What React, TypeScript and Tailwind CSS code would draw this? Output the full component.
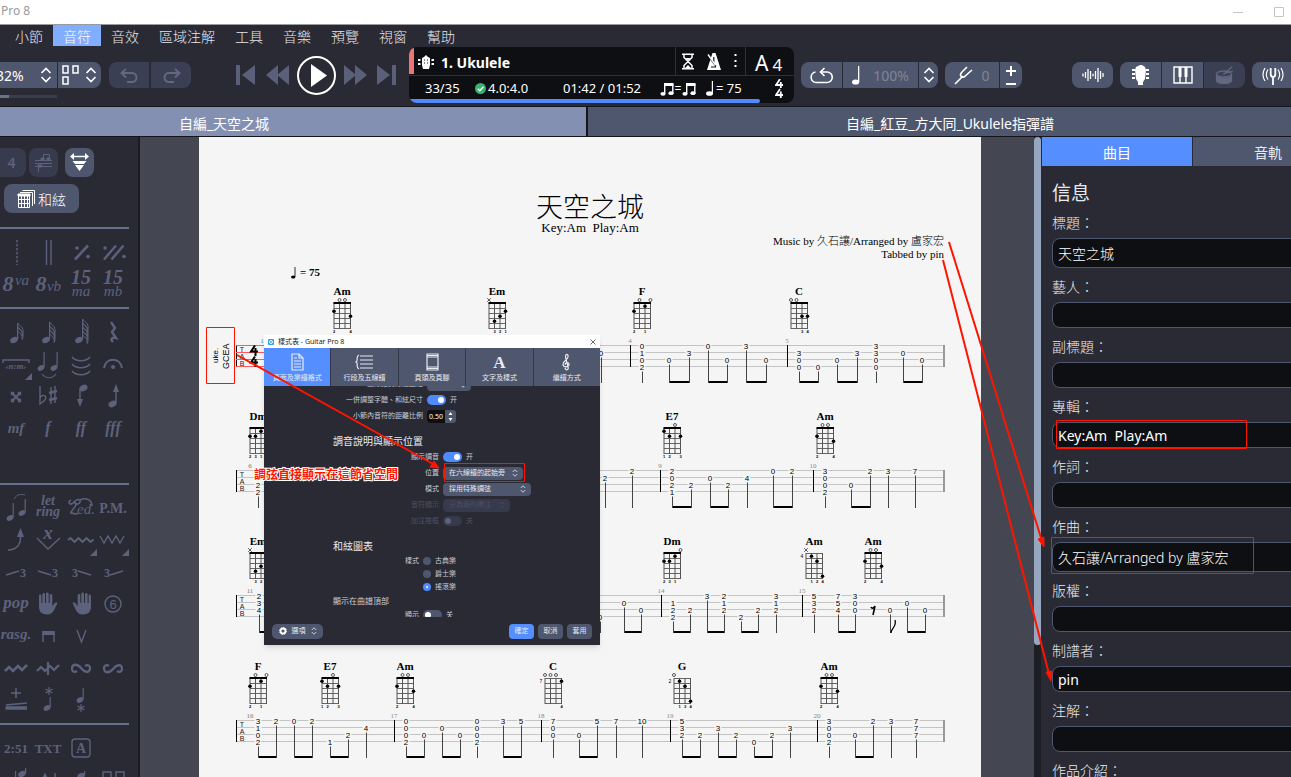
import type { ReactNode } from "react";

const UI = "font-['Noto_Sans','Noto_Sans_CJK_TC',sans-serif]";
const SERIF = "font-['Liberation_Serif','Noto_Sans_CJK_TC',serif]";

/* ---------- small shared drawings ---------- */

function UpDown({ className = "h-4 w-3" }: { className?: string }) {
  return (
    <svg viewBox="0 0 12 16" className={className} fill="none" stroke="currentColor" strokeWidth="1.6">
      <path d="M1.5 6 6 1.5 10.5 6M1.5 10 6 14.5 10.5 10" />
    </svg>
  );
}

type NoteProps = { x: number; y: number; len?: number; flags?: number; r?: number };

function Note({ x, y, len = 16, flags = 0, r = 4 }: NoteProps) {
  const sx = x + r - 0.4;
  return (
    <g stroke="none" fill="currentColor">
      <ellipse cx={x} cy={y} rx={r} ry={r * 0.72} transform={`rotate(-28 ${x} ${y})`} />
      <rect x={sx - 0.6} y={y - len} width="1.2" height={len - 1} />
      {Array.from({ length: flags }, (_, i) => (
        <path
          key={i}
          d={`M${sx} ${y - len + i * 4}c1 2.500 5.500 3.500 5.500 7.500 0 2-.2 3.500-.8 5 0-4.500-2.200-7-4.700-8z`}
          fill="none"
          stroke="currentColor"
          strokeWidth="1"
        />
      ))}
    </g>
  );
}

/* ---------- menu and toolbar ---------- */

const MENUS = ["小節", "音符", "音效", "區域注解", "工具", "音樂", "預覽", "視窗", "幫助"];

function MenuBar() {
  return (
    <nav className="flex h-[21px] pl-[5px] text-[14px] font-light leading-[24px] text-[#e4e6ee]">
      {MENUS.map((m) => (
        <button key={m} className={m === "音符" ? "bg-[#82aeff] px-[10px] text-white" : "px-[10px]"}>
          {m}
        </button>
      ))}
    </nav>
  );
}

function ToolButton({ label, dim, className = "", children }: { label: string; dim?: boolean; className?: string; children: ReactNode }) {
  return (
    <button
      aria-label={label}
      className={`flex h-[26px] items-center ${dim ? "bg-[#3b3f54] text-[#63677f]" : "bg-[#4f576f] text-white"} ${className}`}
    >
      {children}
    </button>
  );
}

function Transport() {
  return (
    <div className="ml-[45px] flex items-center text-[#5a5f7a]">
      <button aria-label="首" className="mr-[11px]">
        <svg width="19" height="20" fill="currentColor"><path d="M0 0h4v20H0zM19 0v20L6 10z" /></svg>
      </button>
      <button aria-label="退" className="mr-[8px]">
        <svg width="23" height="20" fill="currentColor"><path d="M12 0v20L0 10zM23 0v20L11 10z" /></svg>
      </button>
      <button aria-label="播放" className="mr-[8px] flex size-[39px] items-center justify-center rounded-full border-2 border-white text-white">
        <svg width="17" height="23" fill="currentColor" className="ml-[5px]"><path d="M0 0v23L16 11.500z" /></svg>
      </button>
      <button aria-label="進" className="mr-[10px]">
        <svg width="23" height="20" fill="currentColor"><path d="M0 0v20L12 10zM11 0v20L23 10z" /></svg>
      </button>
      <button aria-label="尾">
        <svg width="19" height="20" fill="currentColor"><path d="M15 0h4v20h-4zM0 0v20L13 10z" /></svg>
      </button>
    </div>
  );
}

function EighthPair() {
  return (
    <svg width="14" height="14" viewBox="0 0 14 14" fill="currentColor">
      <path d="M4 1h9.500v3H4z" />
      <path d="M4 2h1.400v9.500H4zM12.100 2h1.400v9h-1.400z" />
      <ellipse cx="3" cy="11.800" rx="2.600" ry="1.900" />
      <ellipse cx="11" cy="11.200" rx="2.600" ry="1.900" />
    </svg>
  );
}

function Display() {
  return (
    <section className="ml-[13px] w-[385px] shrink-0 overflow-hidden rounded-[8px] bg-[#0e0f13] text-white">
      <div className="flex h-[29px] items-center border-b border-[#2e303a]">
        <span className="h-[26px] w-[5px] rounded-tl-[6px] bg-[#ee7377]" />
        <svg width="16" height="16" viewBox="0 0 16 16" className="ml-[4px] mt-[2px]" fill="currentColor">
          <path d="M4 4l2-1 2-2 2 2 2 1v7l-1 4H5l-1-4z" />
          <path d="M0 5h2.500v2H0zM0 9h2.500v2H0zM13.500 5H16v2h-2.500zM13.500 9H16v2h-2.500z" />
          <path d="M6 5.500h1v1H6zM9 5.500h1v1H9zM6 8.500h1v1H6zM9 8.500h1v1H9z" fill="#0e0f13" />
        </svg>
        <strong className="ml-[7px] flex-1 pt-[3px] text-[14px] leading-[20px]">1. Ukulele</strong>
        <div className="flex h-full w-[70px] items-center justify-between border-l border-[#2e303a] pl-[6px] pr-[7px]">
          <svg width="12" height="17" viewBox="0 0 12 17" fill="none" stroke="currentColor" strokeWidth="1.500">
            <path d="M0 1.200h12M0 15.800h12M2 1v3.500l4 4 4-4V1M2 16v-3.500l4-4 4 4V16" />
            <path d="M3.500 5h5L6 7.500zM3 15l3-3 3 3z" fill="currentColor" stroke="none" />
          </svg>
          <svg width="15" height="17" viewBox="0 0 15 17" fill="currentColor">
            <path d="M5.500 0h3L14 17H0z" />
            <path d="M1.500 3.500 9 13.500M6.800 4v6M9 14H4" fill="none" stroke="#0e0f13" strokeWidth="1.200" />
            <path d="M1 1.500 8.500 12" fill="none" stroke="currentColor" strokeWidth="1.400" />
          </svg>
          <svg width="4" height="14" fill="currentColor"><path d="M.5 0h2v2h-2zM.5 6h2v2h-2zM.5 11h2v2h-2z" /></svg>
        </div>
        <div className="flex h-full w-[49px] items-baseline border-l border-[#2e303a] pl-[9px] text-[21px] leading-[33px]">
          A<span className="ml-[4px] text-[17px]">4</span>
        </div>
      </div>
      <div className="flex h-[23px] items-center pl-[16px] pt-[2px] text-[13px]">
        <span className="w-[50px]">33/35</span>
        <svg width="11" height="11" viewBox="0 0 11 11">
          <circle cx="5.500" cy="5.500" r="5.500" fill="#36b36c" />
          <path d="m2.800 5.800 2 2 3.600-4" fill="none" stroke="#fff" strokeWidth="1.400" />
        </svg>
        <span className="ml-[2px] w-[75px]">4.0:4.0</span>
        <span className="w-[97px]">01:42 / 01:52</span>
        <EighthPair />
        <span className="w-[8px] text-center text-[12px]">=</span>
        <EighthPair />
        <svg width="8" height="15" viewBox="0 0 8 15" className="ml-[10px]" fill="currentColor">
          <ellipse cx="3.500" cy="12.500" rx="3.500" ry="2.300" />
          <path d="M5.800 0H7v12.500H5.800z" />
        </svg>
        <span className="ml-[2px] flex-1 text-[13px]">= 75</span>
        <svg width="9" height="19" viewBox="0 0 9 19" className="mr-[10px]" fill="none" stroke="currentColor" strokeWidth="1.800">
          <path d="M5 0 1 6h7M5.800 3v6M5 10l-4 6h7M5.800 12.500V19" />
        </svg>
      </div>
      <div className="h-[4px] w-[351px] rounded-r-full bg-[#4f8bff]" />
    </section>
  );
}

function Toolbar() {
  return (
    <div className="flex h-[58px] items-center">
      <div className="relative flex gap-px">
        <ToolButton label="縮放" className="w-[57px] justify-between pr-[5px]">
          <span className="-ml-[4px] text-[14px]">32%</span>
          <UpDown />
        </ToolButton>
        <ToolButton label="版面" className="w-[43px] justify-center gap-[6px] rounded-r-[8px]">
          <svg width="17" height="20" fill="none" stroke="currentColor" strokeWidth="1.500">
            <path d="M1 1h5v7H1zM11 1h5v7h-5zM1 12h5v7H1z" />
          </svg>
          <UpDown className="h-4 w-3" />
        </ToolButton>
        <div className="absolute left-0 top-[33px] h-[3px] w-[57px] bg-[#3b3d4a]">
          <div className="h-full w-[9px] bg-[#6d7182]" />
        </div>
      </div>
      <div className="ml-[8px] flex gap-[2px]">
        <ToolButton label="復原" dim className="w-[40px] justify-center rounded-l-[8px]">
          <svg width="19" height="15" fill="none" stroke="currentColor" strokeWidth="2"><path d="M6 1 1.500 5 6 9.500M2 5h10a4.500 4.500 0 0 1 0 9H7" /></svg>
        </ToolButton>
        <ToolButton label="重做" dim className="w-[40px] justify-center rounded-r-[8px]">
          <svg width="19" height="15" fill="none" stroke="currentColor" strokeWidth="2"><path d="m13 1 4.500 4L13 9.500M17 5H7a4.500 4.500 0 0 0 0 9h5" /></svg>
        </ToolButton>
      </div>
      <Transport />
      <Display />
      <div className="ml-[7px] flex gap-px">
        <ToolButton label="循環" className="w-[41px] justify-center rounded-l-[8px]">
          <svg width="23" height="17" fill="none" stroke="currentColor" strokeWidth="1.600"><path d="M5.500 5A5.300 5.300 0 0 0 6 15.500h11A5.200 5.200 0 0 0 17 5h-6M14.500 1 10.500 5l4 4" /></svg>
        </ToolButton>
        <ToolButton label="速度" className="w-[75px] justify-center gap-[13px]">
          <svg width="8" height="19" viewBox="0 0 8 19" fill="currentColor"><ellipse cx="3.600" cy="16" rx="3.600" ry="2.600" /><path d="M6 0h1.300v16H6z" /></svg>
          <span className="text-[14px] text-[#808493]">100%</span>
        </ToolButton>
        <ToolButton label="速度調整" className="w-[19px] justify-center rounded-r-[8px]"><UpDown className="h-4 w-3" /></ToolButton>
      </div>
      <div className="ml-[7px] flex gap-px">
        <ToolButton label="移調" className="w-[54px] justify-center gap-[8px] rounded-l-[8px]">
          <svg width="19" height="19" fill="none" stroke="currentColor" strokeWidth="1.600"><path d="m1 18 7-7M13 1 8 6c-3 3-1 6 2 5l8-7M8 11l1-1" /></svg>
          <span className="text-[14px] text-[#808493]">0</span>
        </ToolButton>
        <ToolButton label="加減" className="w-[22px] justify-center rounded-r-[8px]">
          <svg width="12" height="21" fill="none" stroke="currentColor" strokeWidth="2"><path d="M1 6h10M6 1v10M1 19h10" /></svg>
        </ToolButton>
      </div>
      <div className="-mr-[2px] ml-auto flex gap-[7px]">
        <ToolButton label="波形" className="w-[41px] justify-center rounded-[8px]">
          <svg width="22" height="16" stroke="currentColor" strokeWidth="1.300"><path d="M1 6.500v3M3.500 5v6M6 2v12M8.500 4v8M11 6.800v2.400M13.500 4v8M16 1v14M18.500 4v8M21 6v4" /></svg>
        </ToolButton>
        <div className="flex gap-px">
          <ToolButton label="指板" className="w-[41px] justify-center rounded-l-[8px]">
            <svg width="17" height="20" fill="currentColor"><path d="M4 2 8 0h2l3 2 1 3-1 9-2 3v3H6v-3l-2-3-1-9z" /><path d="M0 4h3v2H0zM0 8h3v2H0zM0 12h3v2H0zM14 4h3v2h-3zM14 8h3v2h-3zM14 12h3v2h-3z" /></svg>
          </ToolButton>
          <ToolButton label="鋼琴" className="w-[41px] justify-center">
            <svg width="20" height="18" fill="none" stroke="currentColor" strokeWidth="1.400"><path d="M1 1h18v16H1zM7 10v7M13 10v7" /><path d="M5.500 1h3v10h-3zM11.500 1h3v10h-3z" fill="currentColor" stroke="none" /></svg>
          </ToolButton>
          <ToolButton label="鼓" dim className="w-[41px] justify-center rounded-r-[8px]">
            <svg width="19" height="18" fill="none" stroke="currentColor" strokeWidth="1.300"><ellipse cx="9" cy="8" rx="7.500" ry="3" /><path d="M1.500 10v5c2 3.500 13 3.500 15 0v-5c-2 3-13 3-15 0z" fill="currentColor" /><path d="m9 8 8-7M8 8l10-3" /></svg>
          </ToolButton>
        </div>
        <ToolButton label="調音器" className="w-[41px] justify-center rounded-l-[8px]">
          <svg width="22" height="19" fill="none" stroke="currentColor" strokeWidth="1.200"><path d="M3 2c-2.500 4-2.500 9 0 13M6 3.500c-2 3-2 7 0 10M19 2c2.500 4 2.500 9 0 13M16 3.500c2 3 2 7 0 10" /><path d="M8.700 2v6c0 4 4.600 4 4.600 0V2M11 11v8" strokeWidth="1.800" /></svg>
        </ToolButton>
      </div>
    </div>
  );
}

/* ---------- left palette ---------- */

function Cell({ label, children }: { label: string; children?: ReactNode }) {
  return (
    <button aria-label={label} className="size-8">
      <svg viewBox="0 0 32 32" className="size-8" fill="none" stroke="currentColor" strokeWidth="1.400">
        {children}
      </svg>
    </button>
  );
}

type TextMark = { x?: number; y: number; s: number; t: string; i?: boolean; b?: boolean };

function T({ x = 16, y, s, t, i = false, b = true }: TextMark) {
  return (
    <text
      x={x}
      y={y}
      fontSize={s}
      textAnchor="middle"
      fontFamily="Liberation Serif, serif"
      fontStyle={i ? "italic" : "normal"}
      fontWeight={b ? 700 : 400}
      fill="currentColor"
      stroke="none"
    >
      {t}
    </text>
  );
}

const corner = <path d="M32 25v7h-7z" fill="currentColor" stroke="none" />;
const handPath =
  "M7 13v-5c0-2 2.400-2 2.400 0v7h1V6.500c0-2 2.600-2 2.600 0V15h1V6c0-2 2.700-2 2.700 0v9h1V7.500c0-2 2.600-2 2.600 0V18l2.500-3c1.700-1.500 3.200-.2 2.200 1.200-2.500 4-3.500 10.300-9.500 10.300-6 0-8.500-3-8.500-8z";

function Rule() {
  return <hr className="my-[7px] h-[2px] w-[129px] border-0 bg-[#66708e]" />;
}

function Palette() {
  return (
    <aside className="w-[140px] shrink-0 overflow-hidden border-r-2 border-[#1b1c22] bg-[#2a2a34] text-[#5d627c]">
      <div className="flex pt-[11px]">
        <button className="h-[29px] w-[26px] rounded-r-[8px] bg-[#383b4e] pr-[3px] text-[14px] font-semibold">4</button>
        <button aria-label="聲部" className="ml-[3px] flex size-[29px] items-center justify-center rounded-[8px] bg-[#383b4e]">
          <svg width="19" height="20" fill="none" stroke="currentColor" strokeWidth="1"><path d="M1 7.500h17M1 10.500h17M1 13.500h17M9.500 7V1.500h6V6M4.500 13v6" /><path d="M7 5h3v2H7zM13 5h3v2h-3zM4 12h4v2H4z" fill="currentColor" /></svg>
        </button>
        <button aria-label="對齊" className="ml-[7px] flex size-[29px] items-center justify-center rounded-[8px] bg-[#4f576f] text-white">
          <svg width="19" height="19" fill="currentColor"><path d="M0 3.500 4 0v2.700h11V0l4 3.500L15 7V4.300H4V7zM2.500 8h14L14 11H5zM5 12h9l-4.500 6z" /></svg>
        </button>
      </div>
      <button className="mb-[14px] ml-[4px] mt-[7px] flex h-[29px] w-[75px] items-center justify-center gap-[2px] rounded-[8px] bg-[#4f576f] pt-[2px] text-[14px] font-light text-white">
        <svg width="19" height="20" fill="none" stroke="currentColor" strokeWidth="1" className="-mt-[2px]"><path d="M1.500 6.500h11v12h-11zM4.500 6v13M7.500 6v13M10.500 6v13M1 10.500h12M1 14.500h12M3 3.500h12.500V17M5.500 1.500h12V15" /><path d="M1 5h12v2H1z" fill="currentColor" /></svg>
        和絃
      </button>
      <Rule />
      <div className="grid w-[129px] grid-cols-4">
        <Cell label="虛線"><path d="M17 4v25" strokeDasharray="2.500 1.500" /></Cell>
        <Cell label="雙線"><path d="M14.500 4v25M19 4v25" /></Cell>
        <Cell label="重複一"><path d="m10 23.500 13-14" strokeWidth="2.600" /><circle cx="12" cy="12" r="1.800" fill="currentColor" stroke="none" /><circle cx="23" cy="20.500" r="1.800" fill="currentColor" stroke="none" /></Cell>
        <Cell label="重複二"><path d="m7 23.500 12-14M14.500 23.500l12-14" strokeWidth="2.400" /><circle cx="8" cy="12" r="1.800" fill="currentColor" stroke="none" /><circle cx="27" cy="20.500" r="1.800" fill="currentColor" stroke="none" /></Cell>
        <Cell label="8va"><T x={8} y={23} s={22} t="8" i /><T x={22} y={17} s={15} t="va" i b={false} /></Cell>
        <Cell label="8vb"><T x={9} y={23} s={22} t="8" i /><T x={22} y={23} s={15} t="vb" i b={false} /></Cell>
        <Cell label="15ma"><T y={16} s={20} t="15" i /><T y={28} s={15} t="ma" i b={false} /></Cell>
        <Cell label="15mb"><T y={16} s={20} t="15" i /><T y={28} s={15} t="mb" i b={false} /></Cell>
      </div>
      <Rule />
      <div className="grid w-[129px] grid-cols-4">
        <Cell label="十六分"><Note x={14} y={24} len={17} flags={2} /></Cell>
        <Cell label="三十二分"><Note x={14} y={24} len={18} flags={3} /></Cell>
        <Cell label="六十四分"><Note x={14} y={24} len={21} flags={4} /></Cell>
        <Cell label="休止"><path d="m14 6 4 6-3 4 4 6c-4-1-6 1-3 4" strokeWidth="2.400" /></Cell>
        <Cell label="連音"><path d="M3 15v-3h26v3" /><T y={21} s={9} t="‹n:m›" i /><g>{corner}</g></Cell>
        <Cell label="連結"><Note x={9} y={20} len={16} r={3.5} /><Note x={22} y={20} len={16} r={3.5} /><path d="M10 26c4 5 10 5 14 0" strokeWidth="1.200" /></Cell>
        <Cell label="力度線"><path d="M7 9c4 5 14 5 18 0M7 16c4 5 14 5 18 0M7 23c4 5 14 5 18 0" /></Cell>
        <Cell label="延長"><path d="M7 20c2-11 16-11 18 0" strokeWidth="2" /><circle cx="16" cy="19" r="2" fill="currentColor" stroke="none" /></Cell>
        <Cell label="重升"><path d="m12 13 8 8M20 13l-8 8" strokeWidth="2" /><path d="M11.500 12.500h2v2h-2zM18.500 12.500h2v2h-2zM11.500 19.500h2v2h-2zM18.500 19.500h2v2h-2z" fill="currentColor" /></Cell>
        <Cell label="升降"><path d="M8 6v18c5-3 7-6 5-8-2-1.500-4 0-5 2" /><path d="M19 7v17M23 6v17" /><path d="m17 13 8-2M17 20l8-2" strokeWidth="2.600" /></Cell>
        <Cell label="向下"><ellipse cx="18.500" cy="8" rx="4.200" ry="3" transform="rotate(-24 18.500 8)" fill="currentColor" stroke="none" /><path d="M15 9v14" /><path d="M12 19h6l-3 8z" fill="currentColor" stroke="none" /></Cell>
        <Cell label="向上"><ellipse cx="15.500" cy="24" rx="4.200" ry="3" transform="rotate(-24 15.500 24)" fill="currentColor" stroke="none" /><path d="M19 9v14" /><path d="M16 12h6l-3-8z" fill="currentColor" stroke="none" /></Cell>
        <Cell label="mf"><T y={21} s={15} t="mf" i /></Cell>
        <Cell label="f"><T y={21} s={16} t="f" i /></Cell>
        <Cell label="ff"><T y={21} s={16} t="ff" i /></Cell>
        <Cell label="fff"><T y={21} s={16} t="fff" i /></Cell>
      </div>
      <div className="h-[32px]" />
      <Rule />
      <div className="grid w-[129px] grid-cols-4">
        <Cell label="滑奏"><Note x={10} y={26} len={15} r={3.6} /><Note x={22} y={21} len={14} r={3.6} /><path d="M14 7c3-5 7-5 11-4" strokeWidth="1" /></Cell>
        <Cell label="let ring"><T y={13} s={14} t="let" i /><T y={24} s={14} t="ring" i /></Cell>
        <Cell label="Ped"><T x={21} y={22} s={15} t="ed." i b={false} /><path d="M6 8c-4 2-1 6 2 3 3-4 8-5 7-1-1 3-5 3-5 0M11 11c1 5-5 6-5 10 2-1 4 3 7 0M15 8c6-3 12 0 12 6" strokeWidth="1.600" /></Cell>
        <Cell label="P.M."><T y={21} s={14} t="P.M." /></Cell>
        <Cell label="推弦"><path d="M8 26c9 0 13-6 12.500-14" /><path d="M17 13h7l-3.500-9z" fill="currentColor" stroke="none" /></Cell>
        <Cell label="搖桿"><T y={15} s={19} t="x" i /><path d="m5 14 11 11 12-11" /></Cell>
        <Cell label="揉弦"><path d="m3 16 2.500-2 4 4 4-4 4 4 4-4 4 4 3-2.500" strokeWidth="1.900" /><g>{corner}</g></Cell>
        <Cell label="大揉弦"><path d="m3 12 4 7 4-7 4 7 4-7 4 7 4-7" /><g>{corner}</g></Cell>
        <Cell label="滑入下"><path d="m6 19 13-4" /><T x={23} y={21} s={12} t="3" /></Cell>
        <Cell label="滑入上"><path d="m6 15 13 4" /><T x={23} y={21} s={12} t="3" /></Cell>
        <Cell label="滑出下"><path d="m13 15 13 4" /><T x={10} y={21} s={12} t="3" /></Cell>
        <Cell label="滑出上"><path d="m13 19 13-4" /><T x={10} y={21} s={12} t="3" /></Cell>
        <Cell label="pop"><T y={20} s={17} t="pop" i /></Cell>
        <Cell label="左手"><path d={handPath} fill="currentColor" stroke="none" /></Cell>
        <Cell label="右手"><path d={handPath} transform="translate(33 0) scale(-1 1)" fill="currentColor" stroke="none" /></Cell>
        <Cell label="弦號"><circle cx="16" cy="16" r="8" /><text x="16" y="20.500" fontSize="13" textAnchor="middle" fontFamily="Liberation Sans, sans-serif" fill="currentColor" stroke="none">6</text></Cell>
        <Cell label="rasg."><T y={19} s={15} t="rasg." i /></Cell>
        <Cell label="下撥"><path d="M11 22V12h11v10" /><path d="M10.500 11h12v4h-12z" fill="currentColor" stroke="none" /></Cell>
        <Cell label="上撥"><path d="m12 10 4.500 12L21 10" /></Cell>
        <span />
        <Cell label="波音"><path d="m5 19 4-4 4 4 5-5 4 4 5-5" strokeWidth="2.600" /></Cell>
        <Cell label="逆波音"><path d="m5 19 4-4 4 4 5-5 4 4 5-5M16 10v13" strokeWidth="2.200" /></Cell>
        <Cell label="回音"><path d="M12 14c-3-2-5 0-5 2 0 6 6 5 9 1s9-6 9 0c0 2-2 4-5 2" strokeWidth="2.300" transform="matrix(1 0 0 -1 0 33)" /></Cell>
        <Cell label="逆回音"><path d="M12 14c-3-2-5 0-5 2 0 6 6 5 9 1s9-6 9 0c0 2-2 4-5 2" strokeWidth="2.300" /></Cell>
        <Cell label="震音"><path d="M16 4v10M11 9h10M6 21l21-2" strokeWidth="1.600" /><path d="M5.500 24h21.500" strokeWidth="3.500" /></Cell>
        <Cell label="星上"><Note x={15} y={24} len={11} r={3.6} /><path d="M17 3v8M13.500 5l7 4M20.500 5l-7 4" strokeWidth="1.200" /></Cell>
        <Cell label="星下"><Note x={15} y={16} len={12} r={3.6} /><path d="M16 20v8M12.500 22l7 4M19.500 22l-7 4" strokeWidth="1.200" /></Cell>
      </div>
      <Rule />
      <div className="grid w-[129px] grid-cols-4">
        <Cell label="2:51"><T y={21} s={13} t="2:51" /></Cell>
        <Cell label="TXT"><T y={21} s={13} t="TXT" /></Cell>
        <Cell label="A"><rect x="7" y="7" width="18" height="18" rx="3" /><T y={21} s={14} t="A" /></Cell>
        <span />
        <Cell label="a"><Note x={12} y={20} len={13} flags={0} /><Note x={22} y={10} len={6} flags={0} /></Cell>
        <Cell label="b"><path d="m9 18 4-8 4 8zM23 9v12" fill="currentColor" /></Cell>
        <Cell label="c"><Note x={16} y={12} len={5} /></Cell>
        <Cell label="d"><path d="M6 20V8h8v12M19 20V8h8v12" /></Cell>
      </div>
    </aside>
  );
}

/* ---------- score ---------- */

type Beat = [number, string]; // x and the four courses top to bottom, "-" for none
type Chord = { x: number; name: string; dots: [number, number][]; top: string; base?: string; fingers: string };
type System = { first: string; bars: [number, string][]; chords: Chord[]; groups: Beat[][] };

const Am = { name: "Am", dots: [[0, 2], [3, 3]] as [number, number][], top: "-oo-", fingers: "2--4" };
const Em = { name: "Em", dots: [[1, 4], [2, 3], [3, 2]] as [number, number][], top: "x---", fingers: "-321" };
const F = { name: "F", dots: [[0, 2], [2, 1]] as [number, number][], top: "-o-o", fingers: "2-1-" };
const E7 = { name: "E7", dots: [[0, 1], [1, 2], [3, 2]] as [number, number][], top: "--o-", fingers: "12-3" };
const Dm = { name: "Dm", dots: [[0, 2], [1, 2], [2, 1]] as [number, number][], top: "---o", fingers: "231-" };

const SYSTEMS: System[] = [
  {
    first: "1",
    bars: [[630, "4"], [787, "5"]],
    chords: [
      { x: 342, ...Am },
      { x: 497, ...Em },
      { x: 642, ...F },
      { x: 799, name: "C", dots: [[2, 3], [3, 3]], top: "oo--", fingers: "--34" },
    ],
    groups: [
      [[601, "-0--"]],
      [[642, "0102"]],
      [[669, "--0-"], [689, "-3--"]],
      [[708, "0---"], [727, "--0-"]],
      [[746, "3---"], [766, "--0-"]],
      [[799, "-300"], [818, "---0"]],
      [[837, "--0-"], [857, "-3--"]],
      [[876, "3300"]],
      [[903, "-0--"], [922, "--0-"]],
    ],
  },
  {
    first: "6",
    bars: [[660, "9"], [813, "10"]],
    chords: [{ x: 258, ...Dm }, { x: 672, ...E7 }, { x: 825, ...Am }],
    groups: [
      [[258, "--22"]],
      [[605, "-2--"]],
      [[632, "2---"]],
      [[672, "2021"], [691, "--2-"]],
      [[710, "-0--"], [728, "--2-"]],
      [[747, "-4--"]],
      [[773, "0---"], [792, "2---"]],
      [[825, "3002"]],
      [[851, "--0-"], [870, "2---"]],
      [[888, "3---"]],
      [[915, "7---"]],
    ],
  },
  {
    first: "11",
    bars: [[661, "14"], [802, "15"]],
    chords: [
      { x: 258, ...Em },
      { x: 672, ...Dm },
      { x: 814, name: "Am", dots: [[1, 1], [2, 2], [3, 5]], top: "x---", base: "4", fingers: "-124" },
      { x: 873, ...Am },
    ],
    groups: [
      [[259, "234-"], [276, "--0-"]],
      [[600, "---0"]],
      [[624, "-0--"], [641, "--0-"]],
      [[673, "-122"], [690, "--2-"]],
      [[707, "3---"], [724, "212-"]],
      [[741, "---2"], [758, "--2-"]],
      [[776, "312-"]],
      [[814, "532-"]],
      [[838, "754-"], [855, "300-"]],
      [[890, "--0-"]],
      [[907, "-0--"], [925, "--0-"]],
    ],
  },
  {
    first: "16",
    bars: [[394, "17"], [541, "18"], [670, "19"], [817, "20"]],
    chords: [
      { x: 258, ...F },
      { x: 330, ...E7 },
      { x: 405, ...Am },
      { x: 553, name: "C", dots: [[3, 1]], top: "ooo-", base: "7", fingers: "---4" },
      { x: 682, name: "G", dots: [[1, 1], [2, 2], [3, 5]], top: "o---", base: "2", fingers: "-134" },
      { x: 829, ...Am },
    ],
    groups: [
      [[258, "3102"], [276, "2---"]],
      [[294, "0---"], [312, "2---"]],
      [[330, "---1"], [348, "--2-"]],
      [[366, "-4--"]],
      [[406, "0002"], [424, "--0-"]],
      [[442, "-0--"], [460, "--0-"]],
      [[477, "0002"]],
      [[503, "3---"], [521, "5---"]],
      [[553, "700-"]],
      [[579, "--0-"], [597, "5---"]],
      [[616, "7---"]],
      [[642, "a---"]],
      [[682, "532-"], [700, "--2-"]],
      [[718, "-3--"], [736, "--2-"]],
      [[754, "---0"], [772, "--2-"]],
      [[790, "-3--"]],
      [[829, "3002"]],
      [[855, "--0-"], [873, "2---"]],
      [[891, "3---"]],
      [[916, "777-"]],
    ],
  },
];

const lineY = (i: number) => 60.5 + i * 7;

function ChordBox({ x, name, dots, top, base, fingers }: Chord) {
  const left = x - 8;
  const sx = (i: number) => left + i * 5.5;
  return (
    <g>
      <text x={x} y="10" fontSize="11" fontWeight="700" textAnchor="middle" fontFamily="Liberation Serif, serif">{name}</text>
      {[0, 1, 2, 3, 4, 5].map((r) => (
        <path key={r} d={`M${left} ${18.5 + r * 5}h16.500`} stroke="#666" strokeWidth="1" />
      ))}
      {[0, 1, 2, 3].map((c) => (
        <path key={c} d={`M${sx(c)} 18v26`} stroke="#555" strokeWidth="1" />
      ))}
      {!base && <rect x={left - 0.5} y="17" width="17.500" height="2" />}
      {base && <text x={left - 4} y="23" fontSize="5" textAnchor="middle">{base}</text>}
      {top.split("").map((c, i) =>
        c === "o" ? (
          <circle key={i} cx={sx(i)} cy="15" r="1.500" fill="none" stroke="#333" strokeWidth="0.800" />
        ) : c === "x" ? (
          <path key={i} d={`M${sx(i) - 1.8} 13.200l3.600 3.600m0-3.600l-3.600 3.600`} stroke="#333" strokeWidth="0.800" />
        ) : null,
      )}
      {dots.map(([s, f]) => (
        <circle key={`${s}${f}`} cx={sx(s)} cy={16.2 + f * 5} r="1.800" />
      ))}
      {fingers.split("").map((c, i) =>
        c === "-" ? null : (
          <text key={i} x={sx(i)} y="48" fontSize="4" fontWeight="700" textAnchor="middle" fontFamily="Liberation Sans, sans-serif">{c}</text>
        ),
      )}
    </g>
  );
}

function Staff({ system, opening }: { system: System; opening?: boolean }) {
  return (
    <svg viewBox="199 0 782 125" className="block w-full" fill="#000" fontFamily="Liberation Sans, sans-serif">
      {system.chords.map((c) => (
        <ChordBox key={c.x} {...c} />
      ))}
      {[0, 1, 2, 3].map((i) => (
        <path key={i} d={`M236 ${lineY(i)}H944`} stroke="#c4c4c4" />
      ))}
      <rect x="236" y="60" width="1" height="22" />
      <rect x="943" y="60" width="2" height="22" fill="#999" />
      {["T", "A", "B"].map((t, i) => (
        <text key={t} x="242" y={67 + i * 7} fontSize="7" fill="#222" textAnchor="middle">{t}</text>
      ))}
      <text x={opening ? 262 : 250} y="58" fontSize="7" fill={opening ? "#4a7fd0" : "#777"} textAnchor="middle" fontFamily="Liberation Serif, serif">{system.first}</text>
      {system.bars.map(([x, n]) => (
        <g key={x}>
          <rect x={x} y="60" width="1" height="22" />
          <text x={x} y="58" fontSize="7" fill="#888" textAnchor="middle" fontFamily="Liberation Serif, serif">{n}</text>
        </g>
      ))}
      {system.groups.map((g, k) => (
        <g key={k}>
          {g.length > 1 && <rect x={g[0][0]} y="96" width={g[g.length - 1][0] - g[0][0] + 1} height="2" />}
          {g.map(([x, frets]) => {
            const low = Math.max(...frets.split("").map((c, i) => (c === "-" ? 0 : i)));
            return (
              <g key={x}>
                <path d={`M${x + 0.5} ${lineY(low) + 5}V98`} stroke="#444" />
                {frets.split("").map((c, i) => {
                  const fret = c === "a" ? "10" : c;
                  return c === "-" ? null : (
                    <g key={i}>
                      <rect x={x - 1.5 - fret.length * 2} y={lineY(i) - 3} width={3 + fret.length * 4} height="6" fill="#f5f5f5" />
                      <text x={x} y={lineY(i) + 3} fontSize="8" textAnchor="middle">{fret}</text>
                    </g>
                  );
                })}
              </g>
            );
          })}
        </g>
      ))}
      {opening && (
        <g>
          {[0, 1, 2, 3].map((i) => (
            <path key={i} d={`M236 ${lineY(i)}h28`} stroke="#ff5a5a" />
          ))}
          <path d="M255 60.500l-4 6h7M255.500 63v8M255 71.500l-4 6h7M255.500 74v8" fill="none" stroke="#000" strokeWidth="2" />
          <text transform="translate(218 78) rotate(-90)" fontSize="8">uke.</text>
          <text transform="translate(229 84) rotate(-90)" fontSize="9">GCEA</text>
        </g>
      )}
      {system.first === "11" && (
        <g fill="none" stroke="#000">
          <path d="M871 72c1 2 3 1 4-1l-2 9" strokeWidth="1.600" />
          <path d="M891 98c0-5 6-6 4-13" strokeWidth="1.300" />
        </g>
      )}
    </svg>
  );
}

function Score() {
  return (
    <main className="min-w-0 flex-1 overflow-hidden bg-[#444651] pl-[59px] pr-[53px]">
      <article className={`bg-[#f5f5f5] pt-[57px] text-black ${SERIF}`}>
        <h1 className="text-center text-[27px] font-light leading-[28px]">天空之城</h1>
        <p className="whitespace-pre text-center text-[13px] leading-[12px]">Key:Am  Play:Am</p>
        <p className="pr-[37px] pt-px text-right text-[11px] leading-[13px]">
          <span className="font-light">Music by 久石讓/Arranged by 盧家宏</span>
          <br />
          Tabbed by pin
        </p>
        <p className="mb-[6px] ml-[92px] mt-[5px] flex items-center gap-[4px] text-[11px] font-bold leading-[13px]">
          <svg width="5" height="12" viewBox="0 0 5 12"><ellipse cx="2.200" cy="10" rx="2.200" ry="1.500" /><path d="M3.600 0h.8v10h-.8z" /></svg>
          = 75
        </p>
        {SYSTEMS.map((s, i) => (
          <Staff key={s.first} system={s} opening={i === 0} />
        ))}
      </article>
    </main>
  );
}

/* ---------- right inspector ---------- */

const FIELDS: [string, string][] = [
  ["標題", "天空之城"],
  ["藝人", ""],
  ["副標題", ""],
  ["專輯", "Key:Am  Play:Am"],
  ["作詞", ""],
  ["作曲", "久石讓/Arranged by 盧家宏"],
  ["版權", ""],
  ["制譜者", "pin"],
  ["注解", ""],
  ["作品介紹", ""],
];

function Inspector() {
  return (
    <aside className="w-[249px] shrink-0 overflow-hidden text-[#e8eaf1]">
      <div className="w-[301px]">
        <div className="flex h-[29px] gap-px text-[14px]">
          <button className="flex-1 bg-[#558fff] pt-[2px] text-white">曲目</button>
          <button className="flex-1 bg-[#4f576f] pt-[2px]">音軌</button>
        </div>
        <h2 className="flex h-[38px] items-end pl-[10px] pt-[2px] text-[19px] leading-[22px]">信息</h2>
        {FIELDS.map(([label, value]) => {
          const tall = label === "標題" || label === "作曲";
          return (
            <div key={label} className="pl-[10px]">
              <label htmlFor={label} className="flex h-[34px] items-center pt-[2px] text-[14px] font-light">
                {label}：
              </label>
              <input
                id={label}
                defaultValue={value}
                className={`block w-full rounded-[8px] border border-[#4f576f] bg-[#0e0f13] px-[5px] text-[14px] text-white ${tall ? "h-[30px] font-light" : "h-[26px]"}`}
              />
            </div>
          );
        })}
      </div>
    </aside>
  );
}

/* ---------- style sheet dialog ---------- */

function Row({ label, labelWidth, height = "h-[16px]", dim, children }: { label: string; labelWidth: string; height?: string; dim?: boolean; children: ReactNode }) {
  return (
    <label className={`flex items-center gap-[4px] ${height} ${dim ? "text-[#4c5065]" : "text-[#c9ccd6]"}`}>
      <span className={`shrink-0 text-right ${labelWidth}`}>{label}</span>
      {children}
    </label>
  );
}

function Toggle({ on, dim }: { on?: boolean; dim?: boolean }) {
  return (
    <>
      <input
        type="checkbox"
        defaultChecked={on}
        disabled={dim}
        className={`flex h-[10px] w-[19px] appearance-none items-center rounded-full px-[2px] before:size-[6px] before:rounded-full ${
          on ? "justify-end bg-[#4f8bff] before:bg-white" : dim ? "bg-[#363a4c] before:bg-[#5d627c]" : "bg-[#4f576f] before:bg-white"
        }`}
      />
      <span>{on ? "开" : "关"}</span>
    </>
  );
}

function Drop({ value, width, dim }: { value: string; width: string; dim?: boolean }) {
  return (
    <span className={`flex h-[13px] items-center rounded-[4px] pr-[5px] ${width} ${dim ? "bg-[#363a4c]" : "bg-[#4f576f] text-[#e8eaf1]"}`}>
      <select disabled={dim} className="min-w-0 flex-1 appearance-none bg-transparent pl-[6px]">
        <option>{value}</option>
      </select>
      <UpDown className="h-[8px] w-[6px]" />
    </span>
  );
}

const DIALOG_TABS: [string, ReactNode][] = [
  ["頁面及樂譜格式", <path key="p" d="M4 1h7l4 4v12H4zM11 1v4h4M6 8h7M6 11h7M6 14h7M6 5h3" />],
  ["行段及五線譜", <path key="p" d="M5 3h13M5 7h13M5 11h13M5 15h13M4 2C0 4 4 8 1 9c3 1-1 5 3 7" />],
  ["頁頭及頁腳", <path key="p" d="M4 1h11v16H4zM4 4h11M4 14h11M4 2.500h11M4 15.500h11" />],
  ["文字及樣式", <text key="p" x="9.500" y="15" fontSize="17" fontWeight="700" textAnchor="middle" fontFamily="Liberation Serif, serif" fill="currentColor" stroke="none">A</text>],
  ["編譜方式", <path key="p" d="M8 15c1 3 4 2 3-1L8.500 4c0-4 3-3 2.500 0-.5 3-5 4-5 7.500 0 3 6 3 6 .3 0-2.800-4-2.800-3.800 0" />],
];

function StyleDialog() {
  return (
    <section role="dialog" aria-label="樣式表" className="absolute left-[264px] top-[335px] flex h-[310px] w-[336px] flex-col bg-[#2a2a34] text-[7px] leading-[10px] shadow-md">
      <header className="flex h-[13px] shrink-0 items-center gap-[4px] bg-white pl-[4px] pr-[4px] text-[#222]">
        <svg width="6" height="6"><rect width="6" height="6" rx="1" fill="#35a0ea" /><circle cx="3" cy="3" r="1.500" fill="none" stroke="#fff" /></svg>
        <span className="flex-1">樣式表 - Guitar Pro 8</span>
        <svg width="6" height="6" stroke="#444" strokeWidth="0.800"><path d="m.5.500 5 5M5.500.500l-5 5" /></svg>
      </header>
      <nav className="flex h-[38px] shrink-0 gap-px bg-[#33374a]">
        {DIALOG_TABS.map(([name, icon], i) => (
          <button key={name} className={`flex flex-1 flex-col items-center gap-[2px] pt-[5px] text-[#e8eaf1] ${i === 0 ? "bg-[#558fff]" : "bg-[#4f576f]"}`}>
            <svg width="19" height="18" fill="none" stroke="currentColor" strokeWidth="1.200">{icon}</svg>
            {name}
          </button>
        ))}
      </nav>
      <div className="h-[231px] shrink-0 overflow-hidden">
        <div className="-mt-[10px]">
          <Row label="五線譜的線間距離" labelWidth="w-[159px]"><Drop value="1.25" width="w-[44px]" /><span>mm</span></Row>
          <Row label="一併調整字體、和絃尺寸" labelWidth="w-[159px]"><Toggle on /></Row>
          <Row label="小節內音符的距離比例" labelWidth="w-[159px]">
            <span className="flex h-[13px] items-center overflow-hidden rounded-[3px] bg-[#4f576f] pr-[2px]">
              <input defaultValue="0.50" className="mr-[2px] h-full w-[18px] bg-[#0e0f13] pl-[2px] text-white" />
              <svg width="7" height="11" fill="#fff"><path d="m1.500 4 2-3 2 3zM1.500 7l2 3 2-3z" /></svg>
            </span>
          </Row>
          <h3 className="flex h-[25px] items-end pb-[1px] pl-[69px] text-[10px] leading-[14px] text-[#e8eaf1]">調音說明與顯示位置</h3>
          <Row label="顯示調音" labelWidth="w-[175px]"><Toggle on /></Row>
          <Row label="位置" labelWidth="w-[175px]"><Drop value="在六線譜的起始旁" width="w-[80px]" /></Row>
          <Row label="模式" labelWidth="w-[175px]"><Drop value="採用特殊調弦" width="w-[88px]" /></Row>
          <Row label="音符顯示" labelWidth="w-[175px]" dim><Drop value="分為兩列標注" width="w-[67px]" dim /></Row>
          <Row label="加注邊框" labelWidth="w-[175px]" dim><Toggle dim /></Row>
          <h3 className="flex h-[25px] items-end pb-[1px] pl-[69px] text-[10px] leading-[14px] text-[#e8eaf1]">和絃圖表</h3>
          {["古典樂", "爵士樂", "搖滾樂"].map((r, i) => (
            <div key={r} className="flex h-[13px] items-center gap-[4px] text-[#c9ccd6]">
              <span className="w-[155px] text-right">{i === 0 ? "樣式" : ""}</span>
              <input
                id={r}
                type="radio"
                name="genre"
                defaultChecked={i === 2}
                className="size-[8px] appearance-none rounded-full bg-[#4f576f] checked:border-[3px] checked:border-[#4f8bff] checked:bg-white"
              />
              <label htmlFor={r}>{r}</label>
            </div>
          ))}
          <h4 className="flex h-[16px] items-center pl-[69px] text-[8px] text-[#c9ccd6]">顯示在曲譜頂部</h4>
          <Row label="顯示" labelWidth="w-[155px]" height="h-[12px]"><Toggle /></Row>
        </div>
      </div>
      <footer className="flex flex-1 items-center gap-[4px] px-[8px] text-[#e8eaf1]">
        <button className="mr-auto flex h-[15px] w-[51px] items-center justify-center gap-[5px] rounded-[5px] bg-[#4f576f]">
          <svg width="8" height="8"><circle cx="4" cy="4" r="2.500" fill="none" stroke="#fff" strokeWidth="1.800" /><circle cx="4" cy="4" r="3.500" fill="none" stroke="#fff" strokeDasharray="1.400 1.300" /></svg>
          選項
          <UpDown className="h-[8px] w-[6px]" />
        </button>
        <button className="h-[15px] w-[25px] rounded-[4px] bg-[#558fff]">確定</button>
        <button className="h-[15px] w-[25px] rounded-[4px] bg-[#4f576f]">取消</button>
        <button className="h-[15px] w-[25px] rounded-[4px] bg-[#4f576f]">套用</button>
      </footer>
    </section>
  );
}

/* ---------- red annotations ---------- */

function Annotations() {
  return (
    <>
      <svg className="pointer-events-none absolute left-0 top-0 h-full w-full" fill="none" stroke="#ff1400" strokeWidth="1">
        <path d="M206.500 327.500h28v56h-28zM1056.500 420.500h190v28h-190zM1051.500 537.500h202v36h-202zM444.500 463.500h80v18h-80z" />
        <path d="m949 242 93 299M943 260l106 414M237 355l196 109" strokeWidth="2" />
        <path d="m1044 547-6-8 6-2zM1051 681l-5-9 6-1zM439 468l-9-1 4-6z" fill="#ff1400" />
      </svg>
      <p className="pointer-events-none absolute left-[254px] top-[467px] text-[12px] font-bold leading-[16px] text-[#ff1400] [paint-order:stroke_fill] [-webkit-text-stroke:2px_white]">
        調弦直接顯示在這節省空間
      </p>
    </>
  );
}

export default function App() {
  return (
    <div className={`relative flex h-screen flex-col overflow-hidden bg-[#2a2a34] ${UI}`}>
      <header className="flex h-[25px] shrink-0 items-center justify-between border-b border-[#9a9a9f] bg-white pl-px pr-[6px] text-[12px] text-[#999]">
        <span className="pb-[2px]">Pro 8</span>
        <svg width="52" height="12" fill="none" stroke="#c4c4c4"><path d="M0 6.500h10M41.500 1.500h9v9h-9z" /></svg>
      </header>
      <MenuBar />
      <Toolbar />
      <div className="mt-[2px] shrink-0 overflow-hidden border-y border-[#15161b]">
        <div className="-ml-[138px] -mr-[21px] flex h-[29px] gap-[2px] bg-[#15161b] text-[14px] text-white">
          <button className="flex-1 bg-[#8490b2] pt-[3px]">自編_天空之城</button>
          <button className="flex-1 bg-[#4f576f] pt-[3px]">自編_紅豆_方大同_Ukulele指彈譜</button>
        </div>
      </div>
      <div className="flex min-h-0 flex-1">
        <Palette />
        <Score />
        <div className="mr-px w-[7px] shrink-0 bg-[#1d1e24]">
          <div className="h-[508px] rounded-full bg-[#96a7bf]" />
        </div>
        <Inspector />
      </div>
      <StyleDialog />
      <Annotations />
    </div>
  );
}
